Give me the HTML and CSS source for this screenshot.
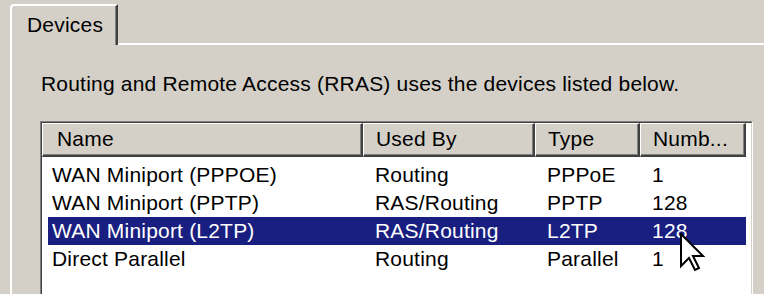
FILE: index.html
```html
<!DOCTYPE html>
<html>
<head>
    <meta charset="UTF-8">
    <title>Devices</title>
    <link rel="stylesheet" href="styles.css">
</head>
<body>
    <div class="tabstrip">
        <div class="tab">Devices</div>
        <div class="tabfill"></div>
    </div>
    <div class="page">
        <p class="intro">Routing and Remote Access (RRAS) uses the devices listed below.</p>
        <div class="listview">
            <div class="lv-inner">
                <div class="lv-head">
                    <div class="hcell c-name">Name</div>
                    <div class="hcell c-used">Used By</div>
                    <div class="hcell c-type">Type</div>
                    <div class="hcell c-num">Numb...</div>
                </div>
                <div class="lv-body">
                    <div class="row">
                        <span class="cell c-name">WAN Miniport (PPPOE)</span>
                        <span class="cell c-used">Routing</span>
                        <span class="cell c-type">PPPoE</span>
                        <span class="cell c-num">1</span>
                    </div>
                    <div class="row">
                        <span class="cell c-name">WAN Miniport (PPTP)</span>
                        <span class="cell c-used">RAS/Routing</span>
                        <span class="cell c-type">PPTP</span>
                        <span class="cell c-num">128</span>
                    </div>
                    <div class="row selected">
                        <span class="cell c-name">WAN Miniport (L2TP)</span>
                        <span class="cell c-used">RAS/Routing</span>
                        <span class="cell c-type">L2TP</span>
                        <span class="cell c-num">128</span>
                    </div>
                    <div class="row">
                        <span class="cell c-name">Direct Parallel</span>
                        <span class="cell c-used">Routing</span>
                        <span class="cell c-type">Parallel</span>
                        <span class="cell c-num">1</span>
                    </div>
                </div>
            </div>
        </div>
    </div>

    <svg class="cursor" xmlns="http://www.w3.org/2000/svg" viewBox="0 0 26 40" width="26" height="40">
        <polygon points="1,1 1,33 9,25 15,37 19,35 13,23 23,23" fill="#fff" stroke="#000" stroke-width="2" stroke-linejoin="miter"/>
    </svg>
</body>
</html>
```

FILE: styles.css
```css
html {
    overflow: hidden;
}

body {
    margin: 0;
    height: 294px;
    overflow: hidden;
    background-color: #d4d0c8;
    font-family: "Liberation Sans", Arial, sans-serif;
    font-size: 21px;
    letter-spacing: 0.2px;
    color: #000;
    position: relative;
}

/* Tab strip */
.tabstrip {
    display: flex;
    padding-top: 4px;
    height: 41px;
}

.tab {
    margin-left: 10px;
    width: 108px;
    border-top: 2px solid #fff;
    border-left: 2px solid #fff;
    border-right: 2px solid #404040;
    border-top-left-radius: 4px;
    box-shadow: inset -1px 0 #808080;
    padding: 7px 0 0 15px;
    box-sizing: border-box;
    height: 41px;
    line-height: 24px;
}

.tabfill {
    flex: 1;
    border-bottom: 2px solid #fff;
}

/* Page */
.page {
    margin-left: 10px;
    border-left: 2px solid #fff;
    height: 249px;
    overflow: hidden;
}

.intro {
    margin: 27px 0 0 29px;
    line-height: 24px;
}

.listview {
    margin: 25px 0 0 28px;
    width: 713px;
    border: 1px solid;
    border-color: #808080 #fff #fff #808080;
    box-sizing: border-box;
}

.lv-inner {
    border: 1px solid;
    border-color: #404040 #d4d0c8 #d4d0c8 #404040;
    background-color: #fff;
    height: 200px;
}

.lv-head {
    display: flex;
    height: 34px;
}

.hcell {
    box-sizing: border-box;
    height: 34px;
    line-height: 30px;
    padding-left: 12px;
    border-top: 1px solid #fff;
    border-left: 1px solid #fff;
    border-right: 2px solid #404040;
    border-bottom: 2px solid #404040;
    box-shadow: inset -1px -1px #808080;
    background-color: #d4d0c8;
    white-space: nowrap;
    overflow: hidden;
}

.hcell.c-name {
    width: 321px;
    padding-left: 14px;
}

.lv-head .c-used { width: 172px; }
.lv-head .c-type { width: 105px; }
.lv-head .c-num { width: 106px; }

.lv-body {
    padding-top: 4px;
}

.row {
    display: flex;
    height: 28px;
    line-height: 28px;
    margin-left: 6px;
    width: 698px;
}

.cell {
    box-sizing: border-box;
    padding-left: 12px;
    white-space: nowrap;
}

.row .c-name { width: 315px; padding-left: 4px; }
.row .c-used { width: 172px; }
.row .c-type { width: 105px; }
.row .c-num { width: 106px; }

.row.selected {
    background-color: #191f80;
    color: #fff;
}

.cursor {
    position: absolute;
    left: 680px;
    top: 233px;
}
```
